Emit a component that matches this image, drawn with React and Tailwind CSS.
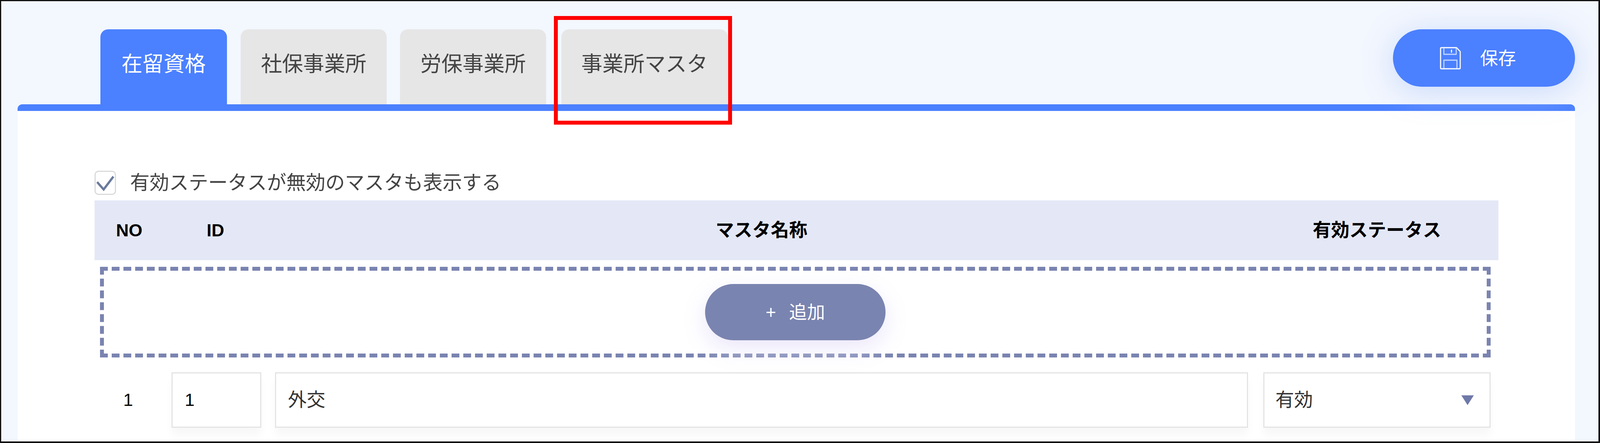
import React from "react";

const font = { fontFamily: '"Liberation Sans", "Noto Sans CJK JP", sans-serif' };

function SaveIcon() {
  return (
    <svg width="54" height="58" viewBox="0 0 58 58" fill="none" strokeLinejoin="round" preserveAspectRatio="none">
      <path d="M4 2H46L56 12V54a2 2 0 0 1-2 2H4a2 2 0 0 1-2-2V4a2 2 0 0 1 2-2Z" stroke="#ffffff" strokeWidth="3" />
      <path d="M11 3V19H45V3" stroke="#c4d6ff" strokeWidth="3" />
      <path d="M32 7V15" stroke="#ffffff" strokeWidth="3" />
      <path d="M11 55V34H47V55" stroke="#c4d6ff" strokeWidth="3" />
    </svg>
  );
}

export default function App() {
  return (
    <div
      style={font}
      className="relative w-full h-[1134px] overflow-hidden border-[3px] border-r-4 border-b-4 border-[#111111] bg-[#f3f7fe] pt-[72px] pl-[42px]"
    >
      {/* Tabs + save */}
      <div className="flex w-[3987px] h-[192px] text-[54px] leading-none">
        <div className="ml-[212px] w-[324px] flex items-center justify-center pb-[14px] rounded-t-[20px] bg-[#4b80ff] text-white">
          在留資格
        </div>
        <div className="ml-[35px] w-[374px] flex items-center justify-center pb-[14px] rounded-t-[20px] bg-[#e6e6e6] text-[#444444]">
          社保事業所
        </div>
        <div className="ml-[34px] w-[374px] flex items-center justify-center pb-[14px] rounded-t-[20px] bg-[#e6e6e6] text-[#444444]">
          労保事業所
        </div>
        <div className="ml-[39px] w-[426px] flex items-center justify-center pb-[14px] rounded-t-[20px] bg-[#e6e6e6] text-[#444444]">
          事業所マスタ
        </div>
        <div className="relative z-10 ml-auto w-[466px] h-[147px] flex items-center pl-[120px] rounded-full bg-[#4b80ff] text-white text-[46px] shadow-[0_11px_80px_rgba(190,210,250,0.8)]">
          <SaveIcon />
          <span className="ml-[49px]">保存</span>
        </div>
      </div>

      {/* Card */}
      <div className="w-[3987px]">
        <div className="h-[17px] rounded-t-[12px] bg-[#4b80ff]" />
        <div className="h-[900px] bg-white pl-[197px] pr-[196px] pt-[153px]">
          <div className="flex items-center h-[62px]">
            <div className="w-[55px] h-[62px] rounded-[10px] border-[3px] border-[#dadada] flex items-center justify-center">
              <svg width="49" height="56" viewBox="0 0 53 56" fill="none" preserveAspectRatio="none">
                <path d="M4 26L22 45L49 12" stroke="#6b7a9e" strokeWidth="6" />
              </svg>
            </div>
            <span className="ml-[36px] text-[50px] leading-none text-[#444444]">
              有効ステータスが無効のマスタも表示する
            </span>
          </div>

          {/* Table header */}
          <div className="mt-[14px] h-[153px] flex items-center bg-[#e4e8f6] font-bold text-black text-[47px] pr-[20px]">
            <div className="w-[287px] pl-[55px] text-[45px]">NO</div>
            <div className="w-[175px] text-[45px]">ID</div>
            <div className="flex-1 text-center">マスタ名称</div>
            <div className="ml-[39px] w-[582px] text-center">有効ステータス</div>
          </div>

          {/* Add row */}
          <div className="mt-[17px] ml-[14px] mr-[20px] h-[232px] border-[10px] border-dashed border-[#7a84b0] flex items-center justify-center">
            <div className="w-[462px] h-[144px] rounded-full bg-[#7a84b0] text-white text-[46px] flex items-center justify-center shadow-[0_20px_60px_rgba(233,227,250,0.9)]">
              <span>+</span>
              <span className="ml-[33px]">追加</span>
            </div>
          </div>

          {/* Data row */}
          <div className="mt-[38px] ml-[14px] mr-[20px] flex items-center text-[#333333] text-[48px]">
            <div className="w-[144px] mr-[39px] text-center text-black text-[45px]">1</div>
            <div className="w-[230px] h-[142px] mr-[35px] flex items-center pl-[31px] border-[3px] border-[#e4e4e4] bg-white shadow-[0_20px_20px_rgba(0,0,0,0.03)] text-black text-[45px]">
              1
            </div>
            <div className="flex-1 h-[142px] mr-[39px] flex items-center pl-[30px] border-[3px] border-[#e4e4e4] bg-white shadow-[0_20px_20px_rgba(0,0,0,0.03)]">
              外交
            </div>
            <div className="w-[582px] h-[142px] flex items-center justify-between pl-[28px] pr-[40px] border-[3px] border-[#e4e4e4] bg-white shadow-[0_20px_20px_rgba(0,0,0,0.03)]">
              <span>有効</span>
              <svg width="32" height="25" viewBox="0 0 34 25" preserveAspectRatio="none">
                <path d="M0 0H34L17 25Z" fill="#6f79a8" />
              </svg>
            </div>
          </div>
        </div>
      </div>

      {/* Highlight box */}
      <div className="absolute left-[1415px] top-[38px] w-[456px] h-[278px] border-[10px] border-[#ff0000] z-20" />
    </div>
  );
}
